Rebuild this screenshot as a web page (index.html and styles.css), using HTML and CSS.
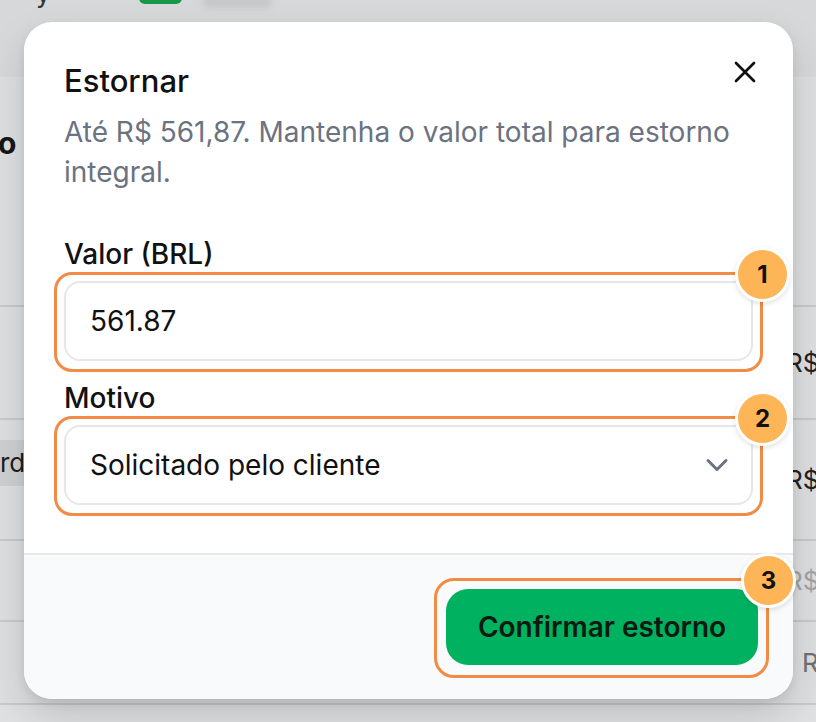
FILE: index.html
```html
<!DOCTYPE html>
<html lang="pt-BR">
<head>
<meta charset="utf-8">
<title>Estornar</title>
<link rel="stylesheet" href="styles.css">
</head>
<body>
<div class="page">
  <div class="topbar">
    <span class="tb-text">y</span>
    <span class="tb-pill"></span>
    <span class="tb-ghost"></span>
  </div>
  <div class="section-head">
    <h2 class="sh-title">o</h2>
  </div>
  <div class="table">
    <div class="row r1"><span class="cell-right">R$ 561,87</span></div>
    <div class="row r2"><span class="chip">rd</span><span class="cell-right">R$ 89,90</span></div>
    <div class="row r3"><span class="cell-right muted">R$ 120,00</span></div>
    <div class="row r4"><span class="cell-right late">R$ 45</span></div>
  </div>
</div>

<div class="modal" role="dialog" aria-labelledby="m-title">
  <div class="modal-body">
    <div class="modal-head">
      <h1 class="title" id="m-title">Estornar</h1>
      <button class="close" aria-label="Fechar">
        <svg viewBox="0 0 24 24" width="36" height="36" fill="none" stroke="currentColor" stroke-width="1.8" stroke-linecap="round"><path d="M6 6 18 18M18 6 6 18"/></svg>
      </button>
    </div>
    <p class="desc">Até R$ 561,87. Mantenha o valor total para estorno integral.</p>

    <div class="field first">
      <label class="label" for="valor">Valor (BRL)</label>
      <div class="annot">
        <input class="input" id="valor" value="561.87">
        <span class="badge">1</span>
      </div>
    </div>

    <div class="field">
      <label class="label">Motivo</label>
      <div class="annot">
        <div class="input select">
          <span>Solicitado pelo cliente</span>
          <svg viewBox="0 0 24 24" width="36" height="36" fill="none" stroke="#6b7280" stroke-width="2" stroke-linecap="round" stroke-linejoin="round"><path d="m6 9 6 6 6-6"/></svg>
        </div>
        <span class="badge">2</span>
      </div>
    </div>
  </div>
  <div class="modal-foot">
    <div class="annot annot-btn">
      <button class="btn">Confirmar estorno</button>
      <span class="badge">3</span>
    </div>
  </div>
</div>
</body>
</html>
```

FILE: styles.css
```css
* { box-sizing: border-box; }
html, body {
  margin: 0;
  padding: 0;
}
body {
  width: 816px;
  height: 722px;
  overflow: hidden;
  position: relative;
  background: #e0e1e2;
  font-family: Inter, "Noto Sans", sans-serif;
  color: #111;
}

/* ----- background page ----- */
.page {
  width: 816px;
}
.topbar {
  height: 77px;
  background: #d7d8da;
  display: flex;
  align-items: flex-start;
  overflow: hidden;
}
.tb-text {
  margin: -22px 0 0 36px;
  font-size: 26px;
  color: #333;
}
.tb-pill {
  width: 43px;
  height: 30px;
  margin: -26px 0 0 88px;
  background: #17994a;
  border-radius: 6px;
}
.tb-ghost {
  width: 70px;
  height: 14px;
  margin: -6px 0 0 20px;
  background: #c7c8ca;
  border-radius: 8px;
  filter: blur(3px);
}
.section-head {
  height: 228px;
  background: #dedfe0;
  padding-top: 46px;
}
.sh-title {
  margin: 0 0 0 -2px;
  font-size: 30px;
  line-height: 40px;
  font-weight: 700;
  color: #161616;
}
.table {
  border-top: 2px solid #c8c9cb;
  background: #dedfe0;
}
.row {
  display: flex;
  align-items: center;
  border-bottom: 2px solid #c8c9cb;
}
.r1 { height: 113px; }
.r2 { height: 121px; }
.r3 { height: 81px; }
.r4 { height: 83px; }
.chip {
  align-self: flex-start;
  margin-top: 20px;
  height: 46px;
  width: 40px;
  padding-left: 0;
  background: #cfd0d2;
  font-size: 26px;
  line-height: 46px;
  color: #1d1d1d;
}
.cell-right {
  margin-left: auto;
  width: 30px;
  white-space: nowrap;
  overflow: hidden;
  font-size: 26px;
  color: #222;
}
.cell-right.muted { color: #a3a4a6; }
.cell-right.late { padding-left: 16px; color: #6f7072; }

/* ----- modal ----- */
.modal {
  position: absolute;
  left: 24px;
  top: 22px;
  width: 769px;
  background: #fff;
  border-radius: 28px;
  box-shadow: 0 18px 40px rgba(0, 0, 0, 0.14), 0 4px 10px rgba(0, 0, 0, 0.08);
}
.modal-body {
  padding: 40px 40px 37px 40px;
}
.modal-head {
  display: flex;
  justify-content: space-between;
  align-items: flex-start;
}
.title {
  margin: 0;
  font-size: 31px;
  line-height: 38px;
  font-weight: 500;
  color: #111;
}
.close {
  width: 36px;
  height: 36px;
  margin: -8px -10px 0 0;
  padding: 0;
  border: 0;
  background: none;
  color: #111;
  display: flex;
}
.desc {
  margin: 12px 0 0;
  font-size: 28px;
  line-height: 40px;
  color: #6b7280;
}
.field { margin-top: 8px; }
.field.first { margin-top: 44px; }
.label {
  display: block;
  font-size: 28px;
  line-height: 36px;
  font-weight: 500;
  color: #111;
}
.annot {
  position: relative;
  margin: 0 -10px;
  padding: 6px 7px 8px;
  border: 3px solid #f28b45;
  border-radius: 18px;
}
.input {
  display: flex;
  align-items: center;
  width: 100%;
  height: 80px;
  border: 2px solid #e6e7e9;
  border-radius: 16px;
  padding: 0 16px 0 24px;
  font-family: inherit;
  font-size: 28px;
  color: #111;
  background: #fff;
  outline: none;
}
.select {
  justify-content: space-between;
}
.select svg { flex: none; }

.badge {
  position: absolute;
  top: -28px;
  right: -30px;
  width: 55px;
  height: 55px;
  border-radius: 50%;
  border: 3px solid #fff;
  background: #fdb557;
  box-shadow: 0 2px 5px rgba(0, 0, 0, 0.12);
  display: flex;
  align-items: center;
  justify-content: center;
  font-size: 24px;
  font-weight: 700;
  color: #111;
}

.modal-foot {
  border-top: 2px solid #e8e9eb;
  background: #f9fafb;
  border-radius: 0 0 28px 28px;
  padding: 23px 24px 21px;
  display: flex;
  justify-content: flex-end;
}
.annot-btn {
  margin: 0;
  padding: 8px 8px 10px 9px;
  border-radius: 20px;
}
.btn {
  display: block;
  width: 312px;
  height: 76px;
  border: 0;
  border-radius: 22px;
  background: #00b15f;
  font-family: inherit;
  font-size: 28px;
  font-weight: 600;
  color: #0d1a12;
}
```
